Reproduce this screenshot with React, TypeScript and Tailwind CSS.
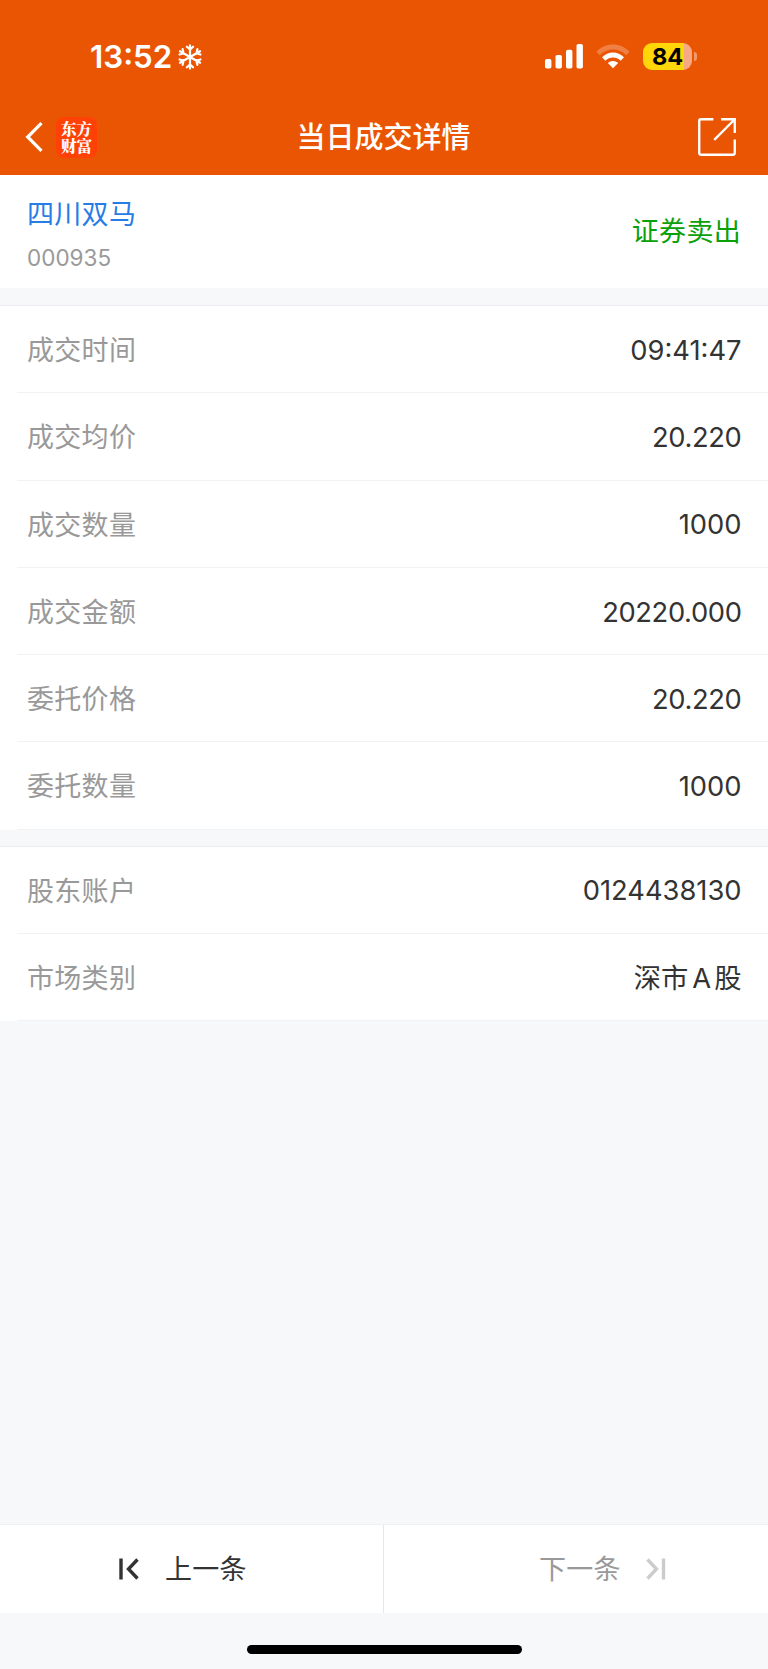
interface DetailItem{
    label: string;
    value: React.ReactNode;
    isDecimal?: boolean;
}

const dealItems: DetailItem[] = [
    { label: "成交时间", value: "09:41:47" },
    { label: "成交均价", value: "20.220", isDecimal: true },
    { label: "成交数量", value: "1000" },
    { label: "成交金额", value: "20220.000", isDecimal: true },
    { label: "委托价格", value: "20.220", isDecimal: true },
    { label: "委托数量", value: "1000" },
];

const accountItems: DetailItem[] = [
    { label: "股东账户", value: "0124438130" },
    { label: "市场类别", value: <>深市<span className="ml-[4px] mr-[3px]">A</span>股</> },
];

const StatusBar: React.FC = () => {
    return(
        <div className="flex items-center justify-between h-[113px] pl-[90px] pr-[71px]">
            <div className="flex items-center gap-[6px] pt-[2px]">
                <span className="text-[31.3px] leading-none font-semibold font-['Inter',sans-serif]">13:52</span>

                <svg width="24" height="26" viewBox="-12 -13 24 26" fill="none" stroke="currentColor" strokeWidth="2.2" strokeLinecap="round">
                    {[0, 60, 120, 180, 240, 300].map((angle) => (
                        <path key={angle} transform={`rotate(${angle})`} d="M0 0V-11.6M-3.1 -10.3L0 -7.4L3.1 -10.3" />
                    ))}
                </svg>
            </div>

            <div className="flex items-center">
                <svg width="38" height="25" viewBox="0 0 38 25" fill="currentColor">
                    <rect x="0" y="15" width="6.4" height="9.6" rx="1.8" />
                    <rect x="10.5" y="11" width="6.4" height="13.6" rx="1.8" />
                    <rect x="21" y="5.8" width="6.4" height="18.8" rx="1.8" />
                    <rect x="31.5" y="0" width="6.4" height="24.6" rx="1.8" />
                </svg>

                <svg className="ml-[13px]" width="34" height="25" viewBox="0 0 35 25" fill="currentColor">
                    <path opacity="0.25" d="M0.5 7.6C10 -2.4 25 -2.4 34.5 7.6L31.1 11.1C23.5 3.5 11.5 3.5 3.9 11.1Z" />
                    <path d="M6.2 13.4C12.5 6.6 22.5 6.6 28.8 13.4L25.4 16.8C21 12.4 14 12.4 9.6 16.8Z" />
                    <path d="M12.2 19.3C15 16.5 20 16.5 22.8 19.3L17.5 24.6Z" />
                </svg>

                <div className="flex items-center ml-[13px]">
                    <div className="flex items-center justify-center w-[49px] h-[27px] pt-[1px] rounded-[9px] bg-linear-to-r from-[#ffd60a] from-[84%] to-[#f6a982] to-[84%]">
                        <span className="text-[23.5px] leading-none font-bold text-black font-['Inter',sans-serif]">84</span>
                    </div>
                    <div className="w-[3px] h-[9px] ml-[2px] rounded-r-full bg-[#f3986b]" />
                </div>
            </div>
        </div>
    );
};

const NavBar: React.FC = () => {
    return(
        <div className="flex items-center justify-between h-[62px] pb-[14px] pl-[25px] pr-[32px]">
            <div className="flex items-center w-[86px]">
                <svg width="18" height="30" viewBox="0 0 18 30" fill="none" stroke="currentColor" strokeWidth="3.2">
                    <path d="M16.5 1.2L2.7 15L16.5 28.8" />
                </svg>

                <div className="flex items-center justify-center size-[41px] ml-[13px] rounded-[8px] bg-[#ff4105]">
                    <span className="w-[32px] text-[15.6px] leading-[17px] text-center font-black break-all font-['Noto_Serif_CJK_SC','Noto_Sans_CJK_SC',serif]">东方财富</span>
                </div>
            </div>

            <h1 className="pt-[1px] text-[29px] leading-none font-medium">当日成交详情</h1>

            <div className="flex justify-end w-[80px]">
                <svg width="38" height="38" viewBox="0 0 37 37" fill="none" stroke="currentColor" strokeWidth="2.3">
                    <path d="M15 1.2H2.8Q1.2 1.2 1.2 2.8V34.2Q1.2 35.8 2.8 35.8H34.2Q35.8 35.8 35.8 34.2V21" />
                    <path d="M22.5 1.2H35.8V14.5M35.8 1.2L15.8 21.3" />
                </svg>
            </div>
        </div>
    );
};

const DetailList: React.FC<{items: DetailItem[]}> = ({ items }) => {
    return(
        <div className="bg-white border-t border-[#ebedf0]">
            {items.map((item) => (
                <div key={item.label} className="pl-[17px]">
                    <div className="flex items-center justify-between h-[87.25px] pt-[3px] pl-[10px] pr-[26.5px] border-b border-[#f1f2f3]">
                        <span className="text-[#999999] tracking-[0.3px]">{item.label}</span>
                        <span className={`text-[27.3px] text-[#333333] ${item.isDecimal ? "tracking-[-0.35px]" : ""}`}>{item.value}</span>
                    </div>
                </div>
            ))}
        </div>
    );
};

export default function App(){
    return(
        <div className="flex flex-col w-[768px] h-[1669px] overflow-hidden bg-[#f6f8fa] text-[27px] leading-none font-['Inter','Noto_Sans_CJK_SC',sans-serif]">
            <header className="h-[175px] shrink-0 text-white bg-[#ea5504]">
                <StatusBar />
                <NavBar />
            </header>

            <section className="flex items-center justify-between h-[113px] shrink-0 px-[27px] bg-white">
                <div className="flex flex-col gap-[19px] pt-[7px]">
                    <span className="text-[#287ce5] tracking-[0.3px]">四川双马</span>
                    <span className="text-[22.5px] leading-none text-[#999999]">000935</span>
                </div>
                <span className="text-[#0aa00a] tracking-[0.3px]">证券卖出</span>
            </section>

            <main className="flex flex-col grow gap-[16px] pt-[17px]">
                <DetailList items={dealItems} />
                <DetailList items={accountItems} />
            </main>

            <footer className="shrink-0">
                <div className="flex h-[89px] bg-white border-t border-[#f0f1f2]">
                    <button className="flex items-center w-[384px] pl-[119px] text-[#333333] border-r border-[#e8e8e8]">
                        <svg width="20" height="22" viewBox="0 0 20 22" fill="none" stroke="currentColor" strokeWidth="3.4">
                            <path d="M2 0.5V21.5M18.5 1.5L9.5 11L18.5 20.5" />
                        </svg>
                        <span className="ml-[26px] tracking-[0.3px]">上一条</span>
                    </button>

                    <button className="flex items-center grow pl-[155px] text-[#999999]">
                        <span className="tracking-[0.3px]">下一条</span>
                        <svg className="ml-[25px] text-[#cccccc]" width="20" height="22" viewBox="0 0 20 22" fill="none" stroke="currentColor" strokeWidth="3.4">
                            <path d="M17.5 0.5V21.5M1.5 1.5L10.5 11L1.5 20.5" />
                        </svg>
                    </button>
                </div>

                <div className="flex justify-center h-[56px] pt-[32px]">
                    <div className="w-[275px] h-[9px] rounded-full bg-black" />
                </div>
            </footer>
        </div>
    );
}
